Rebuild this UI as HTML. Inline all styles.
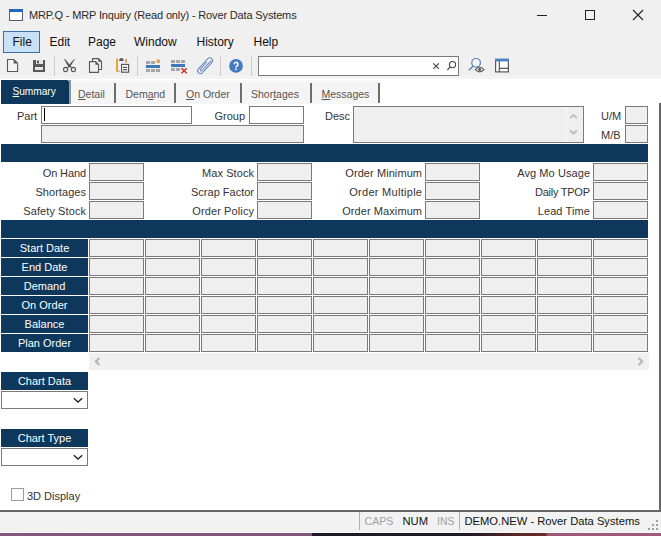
<!DOCTYPE html>
<html><head><meta charset="utf-8"><title>MRP.Q</title>
<style>
html,body{margin:0;padding:0;}
body{width:661px;height:536px;position:relative;overflow:hidden;background:#f0f0f0;font-family:"Liberation Sans",sans-serif;}
u{text-decoration:underline;text-underline-offset:1px;}
</style></head><body>
<div style="position:absolute;left:0px;top:0px;width:661px;height:79px;background:#f0f0f0"></div>
<svg style="position:absolute;left:0;top:0" width="30" height="30" viewBox="0 0 30 30"><rect x="9.5" y="9.5" width="13" height="11" fill="#fff" stroke="#555d66" stroke-width="1"/><rect x="9" y="9" width="14" height="3" fill="#1f66c0"/></svg>
<div style="position:absolute;left:29px;top:8px;font-size:11px;line-height:14px;color:#2a2a2a;white-space:nowrap;letter-spacing:-0.15px">MRP.Q - MRP Inquiry (Read only) - Rover Data Systems</div>
<div style="position:absolute;left:537px;top:15px;width:10px;height:1px;background:#222"></div>
<div style="position:absolute;left:585px;top:10px;width:10px;height:10px;border:1px solid #222;box-sizing:border-box"></div>
<svg style="position:absolute;left:632px;top:9px" width="12" height="12" viewBox="0 0 12 12"><path d="M1 1 L11 11 M11 1 L1 11" stroke="#222" stroke-width="1.1"/></svg>
<div style="position:absolute;left:3px;top:31px;width:37px;height:22px;background:#c9e0f7;border:1px solid #3d6fa6;box-sizing:border-box"></div>
<div style="position:absolute;left:12.5px;top:35px;font-size:12px;line-height:14px;color:#111;white-space:nowrap;">File</div>
<div style="position:absolute;left:49.5px;top:35px;font-size:12px;line-height:14px;color:#111;white-space:nowrap;">Edit</div>
<div style="position:absolute;left:88px;top:35px;font-size:12px;line-height:14px;color:#111;white-space:nowrap;">Page</div>
<div style="position:absolute;left:134px;top:35px;font-size:12px;line-height:14px;color:#111;white-space:nowrap;">Window</div>
<div style="position:absolute;left:196.5px;top:35px;font-size:12px;line-height:14px;color:#111;white-space:nowrap;">History</div>
<div style="position:absolute;left:253.5px;top:35px;font-size:12px;line-height:14px;color:#111;white-space:nowrap;">Help</div>
<div style="position:absolute;left:54px;top:56px;width:1px;height:20px;background:#cdcdcd"></div>
<div style="position:absolute;left:137px;top:56px;width:1px;height:20px;background:#cdcdcd"></div>
<div style="position:absolute;left:220px;top:56px;width:1px;height:20px;background:#cdcdcd"></div>
<div style="position:absolute;left:251px;top:56px;width:1px;height:20px;background:#cdcdcd"></div>
<div style="position:absolute;left:258px;top:56px;width:201px;height:20px;background:#fff;border:1px solid #7a7a7a;box-sizing:border-box"></div>
<svg style="position:absolute;left:0;top:0" width="661" height="80" viewBox="0 0 661 80"><path d="M7.5 59.5 H13.9 L17.6 63.2 V71.5 H7.5 Z" fill="#f3f3f3" stroke="#595959" stroke-width="1.1"/><path d="M13.6 59.2 L17.9 63.5 H13.6 Z" fill="#595959"/><rect x="33" y="60" width="12" height="12" fill="#595959"/><rect x="36" y="60" width="7" height="4" fill="#e6e6e6"/><rect x="37" y="60.6" width="2" height="2.8" fill="#595959"/><rect x="35" y="67" width="8" height="3" fill="#e6e6e6"/><path d="M64.1 59.2 L65 59 L70.4 65.4 L72 67.4 L71.2 68 L67.6 65.6 Z" fill="#595959"/><path d="M74.9 59 L74.2 59 L69.3 64.4 L67.2 67.6 L68.2 68.1 L71 65.6 Z" fill="#595959"/><circle cx="65.6" cy="69.5" r="2.1" fill="none" stroke="#595959" stroke-width="1.1"/><circle cx="73.4" cy="69.5" r="2.1" fill="none" stroke="#595959" stroke-width="1.2"/><path d="M92.5 58.6 H98.6 L101.5 61.5 V69.5 H92.5 Z" fill="#f0f0f0" stroke="#595959" stroke-width="1.1"/><path d="M98.4 58.4 L101.7 61.7 H98.4 Z" fill="#595959"/><path d="M89.5 61.6 H95.6 L98.5 64.5 V72.4 H89.5 Z" fill="#f0f0f0" stroke="#595959" stroke-width="1.1"/><path d="M95.4 61.4 L98.7 64.7 H95.4 Z" fill="#595959"/><rect x="116" y="58.5" width="2" height="13.2" fill="#e9a23b"/><rect x="118" y="70.6" width="1.5" height="1.1" fill="#9a8a70"/><rect x="125" y="59" width="2" height="3.6" fill="#d9a25b"/><path d="M119 61 L119.8 58.6 Q121.4 57.6 123 58.6 L123.8 61 Z" fill="#595959"/><rect x="121.6" y="64.4" width="7" height="7.8" fill="#fff" stroke="#595959" stroke-width="1.2"/><path d="M123 67.4 H127.2 M123 69.6 H127.2" stroke="#595959" stroke-width="1.1"/><rect x="146" y="61" width="4" height="3" fill="#a6a6a6"/><rect x="151" y="61" width="4" height="3" fill="#a6a6a6"/><rect x="156.5" y="59.5" width="3.5" height="3.5" fill="#eea24a"/><rect x="146" y="65" width="14" height="3" fill="#3f78bd"/><rect x="146" y="69" width="4" height="3" fill="#a6a6a6"/><rect x="151" y="69" width="4" height="3" fill="#a6a6a6"/><rect x="156" y="69" width="4" height="3" fill="#a6a6a6"/><rect x="171" y="60" width="4" height="3" fill="#a6a6a6"/><rect x="176" y="60" width="4" height="3" fill="#a6a6a6"/><rect x="181" y="60" width="4" height="3" fill="#a6a6a6"/><rect x="171" y="64" width="14" height="3" fill="#3f78bd"/><rect x="171" y="68" width="4" height="3" fill="#a6a6a6"/><rect x="176" y="68" width="4" height="3" fill="#a6a6a6"/><path d="M181.5 68.3 L186.7 73.3 M186.7 68.3 L181.5 73.3" stroke="#cc2d2d" stroke-width="1.5"/><g transform="translate(205.1 65.7) rotate(-47.5)" fill="none" stroke="#5f86b8" stroke-width="1"><path d="M-6.8 2.8 A2.8 2.8 0 0 1 -6.8 -2.8 H6.8 A2.8 2.8 0 0 1 6.8 2.8 H-6.8 Z"/><path d="M7.5 1.1 H-5.5 A1.1 1.1 0 0 1 -5.5 -1.1 H4"/></g><circle cx="236" cy="65.9" r="6.9" fill="#447cc2"/><path d="M234.2 64.3 A1.9 1.9 0 1 1 236.9 66 C236.2 66.4 236 66.8 236 67.6" fill="none" stroke="#fff" stroke-width="1.5"/><rect x="235.2" y="68.5" width="1.6" height="1.6" fill="#fff"/><path d="M433.3 63.3 L438.9 68.9 M438.9 63.3 L433.3 68.9" stroke="#444" stroke-width="1.1"/><circle cx="452.5" cy="64.6" r="3.1" fill="none" stroke="#444" stroke-width="1.1"/><path d="M450.3 66.9 L447.4 69.9" stroke="#444" stroke-width="1.3"/><circle cx="476.1" cy="62.8" r="4.3" fill="#f2f5f9" stroke="#5a80b0" stroke-width="1.2"/><path d="M473.2 66 L468.8 70.3" stroke="#5a80b0" stroke-width="1.4"/><path d="M475.4 69.6 Q479.7 65 484 69.6 Q479.7 74.2 475.4 69.6 Z" fill="#f6f6f6" stroke="#595959" stroke-width="1.1"/><circle cx="479.7" cy="69.6" r="1.5" fill="#595959"/><rect x="495.6" y="59.4" width="12.8" height="12.5" fill="#fff" stroke="#595959" stroke-width="1.2"/><rect x="495" y="58.8" width="14" height="2.6" fill="#4a7fc0"/><path d="M499.3 61 V72 M499.3 68.4 H508.5" stroke="#595959" stroke-width="1.2"/></svg>
<div style="position:absolute;left:0px;top:76px;width:661px;height:3px;background:#f3f3f3"></div>
<div style="position:absolute;left:0px;top:79px;width:661px;height:432px;background:#fff"></div>
<div style="position:absolute;left:71px;top:80px;width:307px;height:24px;background:linear-gradient(#fafafa,#f3f3f3 15%,#f6f6f6)"></div>
<div style="position:absolute;left:1px;top:80px;width:68px;height:24px;background:#0d385b;border-top-right-radius:2px"></div>
<div style="position:absolute;left:69px;top:80px;width:2px;height:24px;background:#8a99a8"></div>
<div style="position:absolute;left:12.5px;top:86px;font-size:10.2px;line-height:12px;color:#fff;white-space:nowrap;letter-spacing:-0.05px"><u>S</u>ummary</div>
<div style="position:absolute;left:78px;top:88px;font-size:10.5px;line-height:12px;color:#555;white-space:nowrap;"><u>D</u>etail</div>
<div style="position:absolute;left:125.5px;top:88px;font-size:10.5px;line-height:12px;color:#555;white-space:nowrap;">Dem<u>a</u>nd</div>
<div style="position:absolute;left:186px;top:88px;font-size:10.5px;line-height:12px;color:#555;white-space:nowrap;"><u>O</u>n Order</div>
<div style="position:absolute;left:251px;top:88px;font-size:10.5px;line-height:12px;color:#555;white-space:nowrap;">Shor<u>t</u>ages</div>
<div style="position:absolute;left:321.5px;top:88px;font-size:10.5px;line-height:12px;color:#555;white-space:nowrap;"><u>M</u>essages</div>
<div style="position:absolute;left:114px;top:83px;width:2px;height:20px;background:#6e6e6e"></div>
<div style="position:absolute;left:174px;top:83px;width:2px;height:20px;background:#6e6e6e"></div>
<div style="position:absolute;left:240px;top:83px;width:2px;height:20px;background:#6e6e6e"></div>
<div style="position:absolute;left:310px;top:83px;width:2px;height:20px;background:#6e6e6e"></div>
<div style="position:absolute;left:378px;top:83px;width:2px;height:20px;background:#6e6e6e"></div>
<div style="position:absolute;left:659px;top:103px;width:2px;height:409px;background:#666"></div>
<div style="position:absolute;left:0px;top:510px;width:661px;height:2px;background:#646464"></div>
<div style="position:absolute;left:17px;top:109px;font-size:11px;line-height:14px;color:#333333;white-space:nowrap;">Part</div>
<div style="position:absolute;left:41px;top:106px;width:151px;height:18px;background:#fff;border:1px solid #7a7a7a;box-sizing:border-box"></div>
<div style="position:absolute;left:44px;top:108px;width:1px;height:13px;background:#000"></div>
<div style="position:absolute;left:41px;top:125px;width:263px;height:18px;background:#efefef;border:1px solid #7a7a7a;box-sizing:border-box"></div>
<div style="position:absolute;left:214.5px;top:109px;font-size:11px;line-height:14px;color:#333333;white-space:nowrap;">Group</div>
<div style="position:absolute;left:249px;top:106px;width:55px;height:18px;background:#fff;border:1px solid #7a7a7a;box-sizing:border-box"></div>
<div style="position:absolute;left:325px;top:109px;font-size:11px;line-height:14px;color:#333333;white-space:nowrap;">Desc</div>
<div style="position:absolute;left:353px;top:106px;width:231px;height:37px;background:#efefef;border:1px solid #7a7a7a;box-sizing:border-box"></div>
<div style="position:absolute;left:566px;top:107px;width:1px;height:35px;background:#f8f8f8"></div>
<svg style="position:absolute;left:569px;top:113px" width="9" height="7" viewBox="0 0 9 7"><path d="M1.2 5.2 L4.5 1.9 L7.8 5.2" fill="none" stroke="#bababa" stroke-width="1.8"/></svg>
<svg style="position:absolute;left:569px;top:129px" width="9" height="7" viewBox="0 0 9 7"><path d="M1.2 1.5 L4.5 4.8 L7.8 1.5" fill="none" stroke="#bababa" stroke-width="1.8"/></svg>
<div style="position:absolute;left:601px;top:109px;font-size:11px;line-height:14px;color:#333333;white-space:nowrap;">U/M</div>
<div style="position:absolute;left:625px;top:106px;width:23px;height:18px;background:#efefef;border:1px solid #7a7a7a;box-sizing:border-box"></div>
<div style="position:absolute;left:601px;top:128px;font-size:11px;line-height:14px;color:#333333;white-space:nowrap;">M/B</div>
<div style="position:absolute;left:625px;top:125px;width:23px;height:18px;background:#efefef;border:1px solid #7a7a7a;box-sizing:border-box"></div>
<div style="position:absolute;left:1px;top:144px;width:647px;height:18px;background:#0d385b"></div>
<div style="position:absolute;left:-114.12px;top:164px;font-size:11px;line-height:18px;color:#333333;white-space:nowrap;width:200px;text-align:right;letter-spacing:-0.12px">On Hand</div>
<div style="position:absolute;left:89px;top:163px;width:55px;height:18px;background:#efefef;border:1px solid #7a7a7a;box-sizing:border-box"></div>
<div style="position:absolute;left:-113.94px;top:183px;font-size:11px;line-height:18px;color:#333333;white-space:nowrap;width:200px;text-align:right;letter-spacing:0.06px">Shortages</div>
<div style="position:absolute;left:89px;top:182px;width:55px;height:18px;background:#efefef;border:1px solid #7a7a7a;box-sizing:border-box"></div>
<div style="position:absolute;left:-113.91px;top:202px;font-size:11px;line-height:18px;color:#333333;white-space:nowrap;width:200px;text-align:right;letter-spacing:0.09px">Safety Stock</div>
<div style="position:absolute;left:89px;top:201px;width:55px;height:18px;background:#efefef;border:1px solid #7a7a7a;box-sizing:border-box"></div>
<div style="position:absolute;left:54.07px;top:164px;font-size:11px;line-height:18px;color:#333333;white-space:nowrap;width:200px;text-align:right;letter-spacing:0.07px">Max Stock</div>
<div style="position:absolute;left:257px;top:163px;width:55px;height:18px;background:#efefef;border:1px solid #7a7a7a;box-sizing:border-box"></div>
<div style="position:absolute;left:54px;top:183px;font-size:11px;line-height:18px;color:#333333;white-space:nowrap;width:200px;text-align:right;letter-spacing:0px">Scrap Factor</div>
<div style="position:absolute;left:257px;top:182px;width:55px;height:18px;background:#efefef;border:1px solid #7a7a7a;box-sizing:border-box"></div>
<div style="position:absolute;left:54.11px;top:202px;font-size:11px;line-height:18px;color:#333333;white-space:nowrap;width:200px;text-align:right;letter-spacing:0.11px">Order Policy</div>
<div style="position:absolute;left:257px;top:201px;width:55px;height:18px;background:#efefef;border:1px solid #7a7a7a;box-sizing:border-box"></div>
<div style="position:absolute;left:222.08px;top:164px;font-size:11px;line-height:18px;color:#333333;white-space:nowrap;width:200px;text-align:right;letter-spacing:0.08px">Order Minimum</div>
<div style="position:absolute;left:425px;top:163px;width:55px;height:18px;background:#efefef;border:1px solid #7a7a7a;box-sizing:border-box"></div>
<div style="position:absolute;left:222.28px;top:183px;font-size:11px;line-height:18px;color:#333333;white-space:nowrap;width:200px;text-align:right;letter-spacing:0.28px">Order Multiple</div>
<div style="position:absolute;left:425px;top:182px;width:55px;height:18px;background:#efefef;border:1px solid #7a7a7a;box-sizing:border-box"></div>
<div style="position:absolute;left:222.08px;top:202px;font-size:11px;line-height:18px;color:#333333;white-space:nowrap;width:200px;text-align:right;letter-spacing:0.08px">Order Maximum</div>
<div style="position:absolute;left:425px;top:201px;width:55px;height:18px;background:#efefef;border:1px solid #7a7a7a;box-sizing:border-box"></div>
<div style="position:absolute;left:390.08px;top:164px;font-size:11px;line-height:18px;color:#333333;white-space:nowrap;width:200px;text-align:right;letter-spacing:0.08px">Avg Mo Usage</div>
<div style="position:absolute;left:593px;top:163px;width:55px;height:18px;background:#efefef;border:1px solid #7a7a7a;box-sizing:border-box"></div>
<div style="position:absolute;left:389.75px;top:183px;font-size:11px;line-height:18px;color:#333333;white-space:nowrap;width:200px;text-align:right;letter-spacing:-0.25px">Daily TPOP</div>
<div style="position:absolute;left:593px;top:182px;width:55px;height:18px;background:#efefef;border:1px solid #7a7a7a;box-sizing:border-box"></div>
<div style="position:absolute;left:390.12px;top:202px;font-size:11px;line-height:18px;color:#333333;white-space:nowrap;width:200px;text-align:right;letter-spacing:0.12px">Lead Time</div>
<div style="position:absolute;left:593px;top:201px;width:55px;height:18px;background:#efefef;border:1px solid #7a7a7a;box-sizing:border-box"></div>
<div style="position:absolute;left:1px;top:220px;width:647px;height:18px;background:#0d385b"></div>
<div style="position:absolute;left:1px;top:239px;width:87px;height:18px;background:#0d385b"></div>
<div style="position:absolute;left:1px;top:239px;font-size:11px;line-height:18px;color:#fff;white-space:nowrap;width:87px;text-align:center;">Start Date</div>
<div style="position:absolute;left:89px;top:239px;width:55px;height:18px;background:#efefef;border:1px solid #7a7a7a;box-sizing:border-box"></div>
<div style="position:absolute;left:145px;top:239px;width:55px;height:18px;background:#efefef;border:1px solid #7a7a7a;box-sizing:border-box"></div>
<div style="position:absolute;left:201px;top:239px;width:55px;height:18px;background:#efefef;border:1px solid #7a7a7a;box-sizing:border-box"></div>
<div style="position:absolute;left:257px;top:239px;width:55px;height:18px;background:#efefef;border:1px solid #7a7a7a;box-sizing:border-box"></div>
<div style="position:absolute;left:313px;top:239px;width:55px;height:18px;background:#efefef;border:1px solid #7a7a7a;box-sizing:border-box"></div>
<div style="position:absolute;left:369px;top:239px;width:55px;height:18px;background:#efefef;border:1px solid #7a7a7a;box-sizing:border-box"></div>
<div style="position:absolute;left:425px;top:239px;width:55px;height:18px;background:#efefef;border:1px solid #7a7a7a;box-sizing:border-box"></div>
<div style="position:absolute;left:481px;top:239px;width:55px;height:18px;background:#efefef;border:1px solid #7a7a7a;box-sizing:border-box"></div>
<div style="position:absolute;left:537px;top:239px;width:55px;height:18px;background:#efefef;border:1px solid #7a7a7a;box-sizing:border-box"></div>
<div style="position:absolute;left:593px;top:239px;width:55px;height:18px;background:#efefef;border:1px solid #7a7a7a;box-sizing:border-box"></div>
<div style="position:absolute;left:1px;top:258px;width:87px;height:18px;background:#0d385b"></div>
<div style="position:absolute;left:1px;top:258px;font-size:11px;line-height:18px;color:#fff;white-space:nowrap;width:87px;text-align:center;">End Date</div>
<div style="position:absolute;left:89px;top:258px;width:55px;height:18px;background:#efefef;border:1px solid #7a7a7a;box-sizing:border-box"></div>
<div style="position:absolute;left:145px;top:258px;width:55px;height:18px;background:#efefef;border:1px solid #7a7a7a;box-sizing:border-box"></div>
<div style="position:absolute;left:201px;top:258px;width:55px;height:18px;background:#efefef;border:1px solid #7a7a7a;box-sizing:border-box"></div>
<div style="position:absolute;left:257px;top:258px;width:55px;height:18px;background:#efefef;border:1px solid #7a7a7a;box-sizing:border-box"></div>
<div style="position:absolute;left:313px;top:258px;width:55px;height:18px;background:#efefef;border:1px solid #7a7a7a;box-sizing:border-box"></div>
<div style="position:absolute;left:369px;top:258px;width:55px;height:18px;background:#efefef;border:1px solid #7a7a7a;box-sizing:border-box"></div>
<div style="position:absolute;left:425px;top:258px;width:55px;height:18px;background:#efefef;border:1px solid #7a7a7a;box-sizing:border-box"></div>
<div style="position:absolute;left:481px;top:258px;width:55px;height:18px;background:#efefef;border:1px solid #7a7a7a;box-sizing:border-box"></div>
<div style="position:absolute;left:537px;top:258px;width:55px;height:18px;background:#efefef;border:1px solid #7a7a7a;box-sizing:border-box"></div>
<div style="position:absolute;left:593px;top:258px;width:55px;height:18px;background:#efefef;border:1px solid #7a7a7a;box-sizing:border-box"></div>
<div style="position:absolute;left:1px;top:277px;width:87px;height:18px;background:#0d385b"></div>
<div style="position:absolute;left:1px;top:277px;font-size:11px;line-height:18px;color:#fff;white-space:nowrap;width:87px;text-align:center;">Demand</div>
<div style="position:absolute;left:89px;top:277px;width:55px;height:18px;background:#efefef;border:1px solid #7a7a7a;box-sizing:border-box"></div>
<div style="position:absolute;left:145px;top:277px;width:55px;height:18px;background:#efefef;border:1px solid #7a7a7a;box-sizing:border-box"></div>
<div style="position:absolute;left:201px;top:277px;width:55px;height:18px;background:#efefef;border:1px solid #7a7a7a;box-sizing:border-box"></div>
<div style="position:absolute;left:257px;top:277px;width:55px;height:18px;background:#efefef;border:1px solid #7a7a7a;box-sizing:border-box"></div>
<div style="position:absolute;left:313px;top:277px;width:55px;height:18px;background:#efefef;border:1px solid #7a7a7a;box-sizing:border-box"></div>
<div style="position:absolute;left:369px;top:277px;width:55px;height:18px;background:#efefef;border:1px solid #7a7a7a;box-sizing:border-box"></div>
<div style="position:absolute;left:425px;top:277px;width:55px;height:18px;background:#efefef;border:1px solid #7a7a7a;box-sizing:border-box"></div>
<div style="position:absolute;left:481px;top:277px;width:55px;height:18px;background:#efefef;border:1px solid #7a7a7a;box-sizing:border-box"></div>
<div style="position:absolute;left:537px;top:277px;width:55px;height:18px;background:#efefef;border:1px solid #7a7a7a;box-sizing:border-box"></div>
<div style="position:absolute;left:593px;top:277px;width:55px;height:18px;background:#efefef;border:1px solid #7a7a7a;box-sizing:border-box"></div>
<div style="position:absolute;left:1px;top:296px;width:87px;height:18px;background:#0d385b"></div>
<div style="position:absolute;left:1px;top:296px;font-size:11px;line-height:18px;color:#fff;white-space:nowrap;width:87px;text-align:center;">On Order</div>
<div style="position:absolute;left:89px;top:296px;width:55px;height:18px;background:#efefef;border:1px solid #7a7a7a;box-sizing:border-box"></div>
<div style="position:absolute;left:145px;top:296px;width:55px;height:18px;background:#efefef;border:1px solid #7a7a7a;box-sizing:border-box"></div>
<div style="position:absolute;left:201px;top:296px;width:55px;height:18px;background:#efefef;border:1px solid #7a7a7a;box-sizing:border-box"></div>
<div style="position:absolute;left:257px;top:296px;width:55px;height:18px;background:#efefef;border:1px solid #7a7a7a;box-sizing:border-box"></div>
<div style="position:absolute;left:313px;top:296px;width:55px;height:18px;background:#efefef;border:1px solid #7a7a7a;box-sizing:border-box"></div>
<div style="position:absolute;left:369px;top:296px;width:55px;height:18px;background:#efefef;border:1px solid #7a7a7a;box-sizing:border-box"></div>
<div style="position:absolute;left:425px;top:296px;width:55px;height:18px;background:#efefef;border:1px solid #7a7a7a;box-sizing:border-box"></div>
<div style="position:absolute;left:481px;top:296px;width:55px;height:18px;background:#efefef;border:1px solid #7a7a7a;box-sizing:border-box"></div>
<div style="position:absolute;left:537px;top:296px;width:55px;height:18px;background:#efefef;border:1px solid #7a7a7a;box-sizing:border-box"></div>
<div style="position:absolute;left:593px;top:296px;width:55px;height:18px;background:#efefef;border:1px solid #7a7a7a;box-sizing:border-box"></div>
<div style="position:absolute;left:1px;top:315px;width:87px;height:18px;background:#0d385b"></div>
<div style="position:absolute;left:1px;top:315px;font-size:11px;line-height:18px;color:#fff;white-space:nowrap;width:87px;text-align:center;">Balance</div>
<div style="position:absolute;left:89px;top:315px;width:55px;height:18px;background:#efefef;border:1px solid #7a7a7a;box-sizing:border-box"></div>
<div style="position:absolute;left:145px;top:315px;width:55px;height:18px;background:#efefef;border:1px solid #7a7a7a;box-sizing:border-box"></div>
<div style="position:absolute;left:201px;top:315px;width:55px;height:18px;background:#efefef;border:1px solid #7a7a7a;box-sizing:border-box"></div>
<div style="position:absolute;left:257px;top:315px;width:55px;height:18px;background:#efefef;border:1px solid #7a7a7a;box-sizing:border-box"></div>
<div style="position:absolute;left:313px;top:315px;width:55px;height:18px;background:#efefef;border:1px solid #7a7a7a;box-sizing:border-box"></div>
<div style="position:absolute;left:369px;top:315px;width:55px;height:18px;background:#efefef;border:1px solid #7a7a7a;box-sizing:border-box"></div>
<div style="position:absolute;left:425px;top:315px;width:55px;height:18px;background:#efefef;border:1px solid #7a7a7a;box-sizing:border-box"></div>
<div style="position:absolute;left:481px;top:315px;width:55px;height:18px;background:#efefef;border:1px solid #7a7a7a;box-sizing:border-box"></div>
<div style="position:absolute;left:537px;top:315px;width:55px;height:18px;background:#efefef;border:1px solid #7a7a7a;box-sizing:border-box"></div>
<div style="position:absolute;left:593px;top:315px;width:55px;height:18px;background:#efefef;border:1px solid #7a7a7a;box-sizing:border-box"></div>
<div style="position:absolute;left:1px;top:334px;width:87px;height:18px;background:#0d385b"></div>
<div style="position:absolute;left:1px;top:334px;font-size:11px;line-height:18px;color:#fff;white-space:nowrap;width:87px;text-align:center;">Plan Order</div>
<div style="position:absolute;left:89px;top:334px;width:55px;height:18px;background:#efefef;border:1px solid #7a7a7a;box-sizing:border-box"></div>
<div style="position:absolute;left:145px;top:334px;width:55px;height:18px;background:#efefef;border:1px solid #7a7a7a;box-sizing:border-box"></div>
<div style="position:absolute;left:201px;top:334px;width:55px;height:18px;background:#efefef;border:1px solid #7a7a7a;box-sizing:border-box"></div>
<div style="position:absolute;left:257px;top:334px;width:55px;height:18px;background:#efefef;border:1px solid #7a7a7a;box-sizing:border-box"></div>
<div style="position:absolute;left:313px;top:334px;width:55px;height:18px;background:#efefef;border:1px solid #7a7a7a;box-sizing:border-box"></div>
<div style="position:absolute;left:369px;top:334px;width:55px;height:18px;background:#efefef;border:1px solid #7a7a7a;box-sizing:border-box"></div>
<div style="position:absolute;left:425px;top:334px;width:55px;height:18px;background:#efefef;border:1px solid #7a7a7a;box-sizing:border-box"></div>
<div style="position:absolute;left:481px;top:334px;width:55px;height:18px;background:#efefef;border:1px solid #7a7a7a;box-sizing:border-box"></div>
<div style="position:absolute;left:537px;top:334px;width:55px;height:18px;background:#efefef;border:1px solid #7a7a7a;box-sizing:border-box"></div>
<div style="position:absolute;left:593px;top:334px;width:55px;height:18px;background:#efefef;border:1px solid #7a7a7a;box-sizing:border-box"></div>
<div style="position:absolute;left:89px;top:353px;width:560px;height:17px;background:#f0f0f0"></div>
<svg style="position:absolute;left:94px;top:357px" width="7" height="9" viewBox="0 0 7 9"><path d="M5.5 1 L1.8 4.5 L5.5 8" fill="none" stroke="#b4b4b4" stroke-width="2"/></svg>
<svg style="position:absolute;left:637px;top:357px" width="7" height="9" viewBox="0 0 7 9"><path d="M1.5 1 L5.2 4.5 L1.5 8" fill="none" stroke="#b4b4b4" stroke-width="2"/></svg>
<div style="position:absolute;left:1px;top:372px;width:87px;height:18px;background:#0d385b"></div>
<div style="position:absolute;left:1px;top:372px;font-size:11px;line-height:18px;color:#fff;white-space:nowrap;width:87px;text-align:center;">Chart Data</div>
<div style="position:absolute;left:1px;top:391px;width:87px;height:18px;background:#fff;border:1px solid #7a7a7a;box-sizing:border-box"></div>
<svg style="position:absolute;left:73px;top:397px" width="10" height="6" viewBox="0 0 10 6"><path d="M0.8 1.2 L5 5 L9.2 1.2" fill="none" stroke="#222" stroke-width="1.3"/></svg>
<div style="position:absolute;left:1px;top:429px;width:87px;height:18px;background:#0d385b"></div>
<div style="position:absolute;left:1px;top:429px;font-size:11px;line-height:18px;color:#fff;white-space:nowrap;width:87px;text-align:center;">Chart Type</div>
<div style="position:absolute;left:1px;top:448px;width:87px;height:18px;background:#fff;border:1px solid #7a7a7a;box-sizing:border-box"></div>
<svg style="position:absolute;left:73px;top:454px" width="10" height="6" viewBox="0 0 10 6"><path d="M0.8 1.2 L5 5 L9.2 1.2" fill="none" stroke="#222" stroke-width="1.3"/></svg>
<div style="position:absolute;left:11px;top:488px;width:13px;height:13px;background:#fff;border:1px solid #9c9c9c;box-sizing:border-box"></div>
<div style="position:absolute;left:27px;top:489px;font-size:11px;line-height:14px;color:#333333;white-space:nowrap;">3D Display</div>
<div style="position:absolute;left:0px;top:512px;width:661px;height:21px;background:#f2f2f2"></div>
<div style="position:absolute;left:359px;top:512px;width:1px;height:18px;background:#b0b0b0"></div>
<div style="position:absolute;left:459px;top:512px;width:1px;height:18px;background:#b0b0b0"></div>
<div style="position:absolute;left:364.5px;top:514px;font-size:10.6px;line-height:14px;color:#a0a0a0;white-space:nowrap;">CAPS</div>
<div style="position:absolute;left:402.5px;top:514px;font-size:11.2px;line-height:14px;color:#111;white-space:nowrap;">NUM</div>
<div style="position:absolute;left:437px;top:514px;font-size:10.5px;line-height:14px;color:#a0a0a0;white-space:nowrap;">INS</div>
<div style="position:absolute;left:464.5px;top:514px;font-size:11.2px;line-height:14px;color:#111;white-space:nowrap;">DEMO.NEW - Rover Data Systems</div>
<div style="position:absolute;left:656px;top:520px;width:2px;height:2px;background:#a0a0a0"></div>
<div style="position:absolute;left:652px;top:524px;width:2px;height:2px;background:#a0a0a0"></div>
<div style="position:absolute;left:656px;top:524px;width:2px;height:2px;background:#a0a0a0"></div>
<div style="position:absolute;left:648px;top:528px;width:2px;height:2px;background:#a0a0a0"></div>
<div style="position:absolute;left:652px;top:528px;width:2px;height:2px;background:#a0a0a0"></div>
<div style="position:absolute;left:656px;top:528px;width:2px;height:2px;background:#a0a0a0"></div>
<div style="position:absolute;left:0px;top:532px;width:661px;height:1px;background:#f6f9fc"></div>
<div style="position:absolute;left:0px;top:533px;width:661px;height:3px;background:linear-gradient(90deg,#84587e 0,#80567c 312px,#1e1826 312px,#221a26 470px,#5a2828 520px,#6a2a2a 545px,#9c5878 548px,#a05a7a 661px)"></div>
</body></html>
